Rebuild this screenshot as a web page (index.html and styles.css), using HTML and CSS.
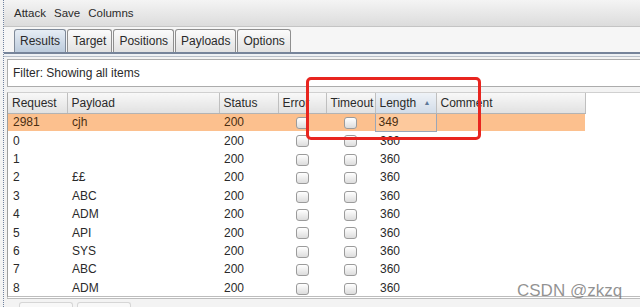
FILE: index.html
```html
<!DOCTYPE html>
<html>
	<head>
		<title>Intruder attack</title>
		<link rel="stylesheet" href="styles.css">
	</head>
	<body>
		<div class="window">
			<div class="menubar">
				<span>Attack</span>
				<span>Save</span>
				<span>Columns</span>
			</div>

			<div class="tabs">
				<div class="tab active">Results</div>
				<div class="tab">Target</div>
				<div class="tab">Positions</div>
				<div class="tab">Payloads</div>
				<div class="tab">Options</div>
			</div>
			<div class="tabline"></div>

			<div class="content">
				<div class="filter">Filter: Showing all items</div>

				<div class="results">
					<table class="grid">
						<colgroup>
							<col class="c-req">
							<col class="c-pay">
							<col class="c-status">
							<col class="c-err">
							<col class="c-time">
							<col class="c-len">
							<col class="c-comment">
						</colgroup>
						<thead>
							<tr>
								<th>Request</th>
								<th>Payload</th>
								<th>Status</th>
								<th>Error</th>
								<th>Timeout</th>
								<th class="sorted">Length <span class="arrow">&#9650;</span></th>
								<th>Comment</th>
							</tr>
						</thead>
						<tbody>
							<tr class="selected">
								<td>2981</td>
								<td>cjh</td>
								<td>200</td>
								<td class="chk"><span class="box"></span></td>
								<td class="chk"><span class="box"></span></td>
								<td class="focus">349</td>
								<td></td>
							</tr>
							<tr><td>0</td><td></td><td>200</td><td class="chk"><span class="box"></span></td><td class="chk"><span class="box"></span></td><td>360</td><td></td></tr>
							<tr><td>1</td><td></td><td>200</td><td class="chk"><span class="box"></span></td><td class="chk"><span class="box"></span></td><td>360</td><td></td></tr>
							<tr><td>2</td><td>&pound;&pound;</td><td>200</td><td class="chk"><span class="box"></span></td><td class="chk"><span class="box"></span></td><td>360</td><td></td></tr>
							<tr><td>3</td><td>ABC</td><td>200</td><td class="chk"><span class="box"></span></td><td class="chk"><span class="box"></span></td><td>360</td><td></td></tr>
							<tr><td>4</td><td>ADM</td><td>200</td><td class="chk"><span class="box"></span></td><td class="chk"><span class="box"></span></td><td>360</td><td></td></tr>
							<tr><td>5</td><td>API</td><td>200</td><td class="chk"><span class="box"></span></td><td class="chk"><span class="box"></span></td><td>360</td><td></td></tr>
							<tr><td>6</td><td>SYS</td><td>200</td><td class="chk"><span class="box"></span></td><td class="chk"><span class="box"></span></td><td>360</td><td></td></tr>
							<tr><td>7</td><td>ABC</td><td>200</td><td class="chk"><span class="box"></span></td><td class="chk"><span class="box"></span></td><td>360</td><td></td></tr>
							<tr><td>8</td><td>ADM</td><td>200</td><td class="chk"><span class="box"></span></td><td class="chk"><span class="box"></span></td><td>360</td><td></td></tr>
						</tbody>
					</table>
				</div>

				<div class="bottom-tabs">
					<span class="stub"></span>
					<span class="stub"></span>
				</div>
			</div>
		</div>

		<div class="highlight"></div>
		<div class="watermark">CSDN @zkzq</div>
	</body>
</html>
```

FILE: styles.css
```css
* {
	margin: 0;
	padding: 0;
	box-sizing: border-box;
}

body {
	font-family: "Liberation Sans", Arial, sans-serif;
	font-size: 12px;
	color: #2a2a2a;
	background: #f3f3f3;
	width: 640px;
	height: 307px;
	overflow: hidden;
	position: relative;
}

.window {
	margin-left: 3px;
	border-left: 1px dotted #6f82a0;
	height: 307px;
}

.menubar {
	height: 27px;
	display: flex;
	align-items: center;
	gap: 8px;
	padding-left: 10px;
	font-size: 11.5px;
	background: linear-gradient(#f4f4f4, #dcdcdc);
	border-bottom: 1px solid #c4c4c4;
}

.tabs {
	display: flex;
	padding: 2px 0 0 10px;
	background: #f6f6f6;
}

.tab {
	height: 23px;
	padding: 0 5px;
	display: flex;
	align-items: center;
	border: 1px solid #8f8f8f;
	border-bottom: none;
	border-radius: 3px 3px 0 0;
	background: linear-gradient(#fbfbfb, #e2e2e2);
	margin-right: 1px;
}

.tab.active {
	background: linear-gradient(#e6edf5, #bccbdc);
	border-color: #7f8a99;
}

.tabline {
	height: 5px;
	border-top: 2px solid #76849a;
	border-bottom: 1px solid #b9c0ca;
	background: #eef1f4;
}

.content {
	padding-left: 3px;
}

.filter {
	margin-top: 2px;
	height: 28px;
	display: flex;
	align-items: center;
	padding-left: 5px;
	background: #fff;
	border: 1px solid #acacac;
	border-right: none;
}

.results {
	margin-top: 5px;
	height: 207px;
	background: #fff;
	border-left: 1px solid #9d9d9d;
	border-top: 1px solid #d0d0d0;
	border-bottom: 3px double #bdbdbd;
	overflow: hidden;
}

.grid {
	table-layout: fixed;
	border-collapse: collapse;
	width: 577px;
}

.c-req { width: 59px; }
.c-pay { width: 152px; }
.c-status { width: 59px; }
.c-err { width: 48px; }
.c-time { width: 49px; }
.c-len { width: 61px; }
.c-comment { width: 149px; }

.grid th {
	height: 20px;
	font-weight: normal;
	text-align: left;
	padding-left: 4px;
	white-space: nowrap;
	overflow: hidden;
	background: linear-gradient(#f8f8f8, #e1e1e1);
	border-right: 1px solid #bfbfbf;
	border-bottom: 1px solid #b3b3b3;
}

.grid th.sorted {
	background: linear-gradient(#eef2f7, #d2dce8);
	position: relative;
}

.arrow {
	position: absolute;
	right: 5px;
	top: 6px;
	font-size: 7px;
	color: #5e7899;
}

.grid td {
	height: 18.4px;
	padding-left: 5px;
	white-space: nowrap;
	overflow: hidden;
}

.grid tr.selected td {
	background: #fcc08e;
	color: #4a2e12;
}

.grid td.focus {
	border: 1px solid #9aa6b8;
	background: #fdc99d !important;
	padding-left: 3px;
}

.grid td.chk {
	padding-left: 0;
	text-align: center;
}

.box {
	display: inline-block;
	width: 13px;
	height: 12px;
	vertical-align: middle;
	border: 1px solid #9b9b9b;
	border-radius: 3px;
	background: linear-gradient(#ffffff, #dcdcdc);
}

.bottom-tabs {
	display: flex;
	gap: 4px;
	padding: 3px 0 0 12px;
}

.stub {
	width: 54px;
	height: 6px;
	border: 1px solid #d6d6d6;
	border-bottom: none;
	border-radius: 3px 3px 0 0;
	background: #f8f8f8;
}

/* red marker drawn over the screenshot */
.highlight {
	position: absolute;
	left: 306px;
	top: 77px;
	width: 175px;
	height: 63px;
	border: 3px solid #e8251f;
	border-radius: 5px;
	pointer-events: none;
}

.watermark {
	position: absolute;
	left: 517px;
	top: 281px;
	font-size: 17px;
	color: rgba(110, 110, 110, 0.75);
}
```
